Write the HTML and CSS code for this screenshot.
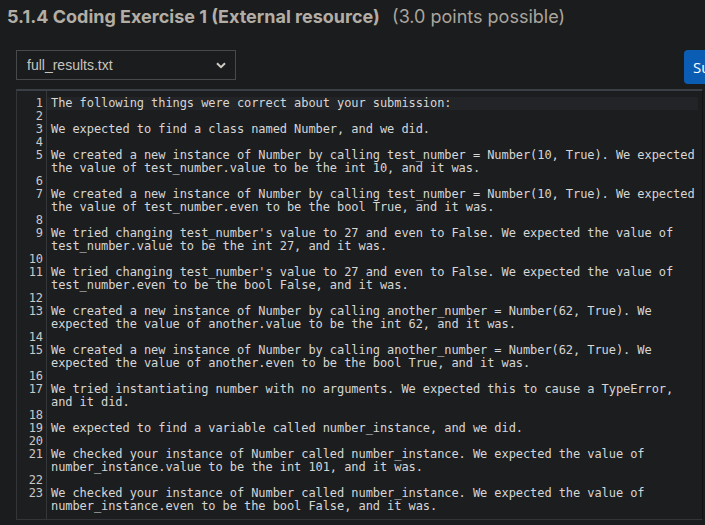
FILE: index.html
```html
<!DOCTYPE html>
<html>
<head>
<meta charset="utf-8">
<link rel="stylesheet" href="styles.css">
</head>
<body>
<h2 class="title"><span class="name">5.1.4 Coding Exercise 1 (External resource)</span> <span class="points">(3.0 points possible)</span></h2>
<div class="toolbar">
  <div class="select">
    <span>full_results.txt</span>
    <svg class="chev" width="10" height="7" viewBox="0 0 10 7"><path d="M1 1.2 L5 5.2 L9 1.2" fill="none" stroke="#d0ccc4" stroke-width="2"/></svg>
  </div>
  <button class="submit">Submit</button>
</div>
<div class="editor">
  <div class="ln active">1</div><div class="tx active">The following things were correct about your submission:</div>
  <div class="ln">2</div><div class="tx"></div>
  <div class="ln">3</div><div class="tx">We expected to find a class named Number, and we did.</div>
  <div class="ln">4</div><div class="tx"></div>
  <div class="ln">5</div><div class="tx">We created a new instance of Number by calling test_number = Number(10, True). We expected the value of test_number.value to be the int 10, and it was.</div>
  <div class="ln">6</div><div class="tx"></div>
  <div class="ln">7</div><div class="tx">We created a new instance of Number by calling test_number = Number(10, True). We expected the value of test_number.even to be the bool True, and it was.</div>
  <div class="ln">8</div><div class="tx"></div>
  <div class="ln">9</div><div class="tx">We tried changing test_number's value to 27 and even to False. We expected the value of test_number.value to be the int 27, and it was.</div>
  <div class="ln">10</div><div class="tx"></div>
  <div class="ln">11</div><div class="tx">We tried changing test_number's value to 27 and even to False. We expected the value of test_number.even to be the bool False, and it was.</div>
  <div class="ln">12</div><div class="tx"></div>
  <div class="ln">13</div><div class="tx">We created a new instance of Number by calling another_number = Number(62, True). We expected the value of another.value to be the int 62, and it was.</div>
  <div class="ln">14</div><div class="tx"></div>
  <div class="ln">15</div><div class="tx">We created a new instance of Number by calling another_number = Number(62, True). We expected the value of another.even to be the bool True, and it was.</div>
  <div class="ln">16</div><div class="tx"></div>
  <div class="ln">17</div><div class="tx">We tried instantiating number with no arguments. We expected this to cause a TypeError, and it did.</div>
  <div class="ln">18</div><div class="tx"></div>
  <div class="ln">19</div><div class="tx">We expected to find a variable called number_instance, and we did.</div>
  <div class="ln">20</div><div class="tx"></div>
  <div class="ln">21</div><div class="tx">We checked your instance of Number called number_instance. We expected the value of number_instance.value to be the int 101, and it was.</div>
  <div class="ln">22</div><div class="tx"></div>
  <div class="ln">23</div><div class="tx">We checked your instance of Number called number_instance. We expected the value of number_instance.even to be the bool False, and it was.</div>
</div>
</body>
</html>
```
FILE: styles.css
```css
html, body {
  margin: 0;
  padding: 0;
  background: #1b1c1e;
  overflow: hidden;
}
body {
  width: 705px;
  height: 525px;
  font-family: Inter, "Liberation Sans", sans-serif;
}
.title {
  margin: 0;
  padding: 4px 7px 0;
  height: 26px;
  font-size: 18px;
  line-height: 26px;
  white-space: nowrap;
  color: #b3aea5;
}
.title .name {
  font-weight: 700;
}
.title .points {
  font-weight: 400;
  margin-left: 8px;
  color: #aaa59d;
}
.toolbar {
  display: flex;
  align-items: flex-start;
  padding: 20px 0 0 16px;
  height: 39px;
}
.select {
  box-sizing: border-box;
  width: 220px;
  height: 30px;
  border: 1px solid #48494b;
  display: flex;
  align-items: center;
  justify-content: space-between;
  padding: 0 9px 0 10px;
  font-family: "Liberation Sans", Arial, sans-serif;
  font-size: 14px;
  color: #c9c5bd;
}
.chev {
  margin-top: 1px;
}
.submit {
  margin-left: auto;
  margin-right: -55px;
  flex-shrink: 0;
  width: 76px;
  height: 34px;
  border: none;
  border-radius: 4px;
  background: #0b5db4;
  color: #ffffff;
  font-family: "Open Sans", "Liberation Sans", sans-serif;
  font-size: 15px;
  text-align: left;
  padding: 0 0 0 9px;
}
.editor {
  box-sizing: border-box;
  margin-left: 16px;
  width: 687px;
  border-top: 2px solid #3b4047;
  border-left: 1px solid #333538;
  border-right: 1px solid #121314;
  border-bottom: 1px solid #333538;
  padding: 6px 0 6px;
  display: grid;
  grid-template-columns: 30px 1fr;
  background: linear-gradient(to right, #1d1e20 0, #1d1e20 29px, #35383b 29px, #35383b 30px, #1c1d1f 30px);
  font-family: "DejaVu Sans Mono", "Liberation Mono", monospace;
  font-size: 12px;
  line-height: 13px;
  letter-spacing: -0.074px;
}
.ln {
  text-align: right;
  padding-right: 4px;
  color: #c9c9c9;
}
.tx {
  padding-left: 4px;
  width: 647px;
  white-space: pre-wrap;
  color: #d6d6d6;
  min-height: 13px;
}
.tx.active {
  background: #222427;
}
```
